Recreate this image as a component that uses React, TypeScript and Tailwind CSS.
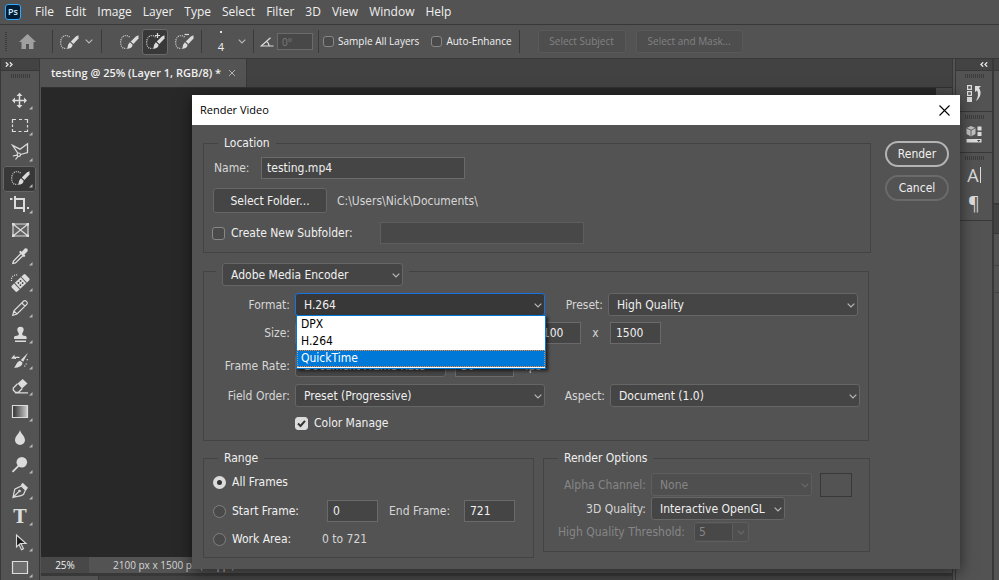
import type { ComponentProps, ReactNode } from "react";
import clsx from "clsx";

const menus = ["File", "Edit", "Image", "Layer", "Type", "Select", "Filter", "3D", "View", "Window", "Help"];

function Chevron({ className }: { className?: string }) {
  return (
    <svg viewBox="0 0 8 5" className={clsx("h-[5px] w-2 shrink-0 fill-none stroke-current", className)} strokeWidth="1.2">
      <path d="M.7.7 4 4 7.3.7" />
    </svg>
  );
}

function DoubleArrow({ flip }: { flip?: boolean }) {
  return (
    <svg viewBox="0 0 8 5" className={clsx("h-[5px] w-2 fill-none stroke-[#e0e0e0]", flip && "rotate-180")} strokeWidth="1.4">
      <path d="M.8.3 3 2.5.8 4.7M4.8.3 7 2.5 4.8 4.7" />
    </svg>
  );
}

function Grip() {
  return (
    <div className="flex h-1 gap-px">
      {[...Array(10)].map((_, i) => (
        <span key={i} className="w-px bg-[#3c3c3c]" />
      ))}
    </div>
  );
}

const brush = (
  <g fill="currentColor" stroke="none">
    <path d="M26.5 5.2v3.2L21.4 14l-2.6-2.4 5-5z" />
    <path d="M17.9 12.2l2.7 2.6c-.2 2.6-2.2 4-6.3 3.9 1.7-.9 1.3-2 1.8-4z" />
  </g>
);

const dottedLasso = (
  <path d="M17.5 7.2C15.5 5 12 5 10.2 7.4S8 14.5 10 17c1.2 1.4 2.6 1.6 4 1" strokeWidth="1.2" strokeDasharray="1 1.1" />
);

const tools: { name: string; icon: ReactNode; flat?: boolean }[] = [
  {
    name: "Move",
    icon: (
      <>
        <path d="M16.5 6v13M10 12.5h13" strokeWidth="1.5" />
        <path d="M16.5 4.8l3 3.2h-6zM16.5 20.2l3-3.2h-6zM9 12.5l3-3v6zM24 12.5l-3-3v6z" fill="currentColor" stroke="none" />
      </>
    ),
  },
  {
    name: "Marquee",
    icon: <path d="M9.5 9V5.5H13M16 5.5h3M21.5 5.5h3V9M24.5 11v2.5M24.5 15.5v2H21M18.5 17.5h-3M13 17.5H9.5V15M9.5 13v-2.500" strokeWidth="1.2" />,
  },
  {
    name: "Lasso",
    icon: (
      <>
        <path d="M15 13.5 9.7 5.5l7.3 3.700 7.500-5.500v8.800L17.500 14.500" strokeWidth="1.3" />
        <circle cx="15.8" cy="14.7" r="1.7" strokeWidth="1.2" />
        <path d="M14.3 15.2l-4.500.8M15 16.300 12.500 19.500" strokeWidth="1.2" />
      </>
    ),
  },
  { name: "Quick Selection", icon: <>{dottedLasso}{brush}</> },
  {
    name: "Crop",
    icon: <path d="M7 7h2.500M12 4v12H22M24 16h2M13 7h8v13" strokeWidth="2" />,
  },
  {
    name: "Frame",
    flat: true,
    icon: (
      <>
        <path d="M10 6h15v12H10zM10 6l15 12M25 6 10 18" fill="#636363" strokeWidth="1.2" />
        <path d="M9 5h2.500v2.500H9zM23.500 5H26v2.500h-2.500zM9 16.500h2.500V19H9zM23.500 16.500H26V19h-2.500z" fill="currentColor" stroke="none" />
      </>
    ),
  },
  {
    name: "Eyedropper",
    icon: (
      <>
        <path d="M18 9.500 10.500 17l-.7 2.500 2.700-.5L20 11.500" strokeWidth="1.3" />
        <path d="M16 8l1.500-1.300 1.300 1 2.700-3c2-1.500 4.200.7 2.900 2.700l-3 3 1 1.300-1.400 1.500z" fill="currentColor" stroke="none" />
      </>
    ),
  },
  {
    name: "Healing",
    icon: (
      <>
        <path d="M8.500 11c-.7-4 2.500-7 6.500-6" strokeDasharray="1 1.2" strokeWidth="1.2" />
        <g transform="rotate(-43 17.5 13)">
          <rect x="8" y="9" width="19" height="8" rx="1.5" fill="currentColor" stroke="none" />
          <path d="M13 9v8M22 9v8" stroke="#535353" strokeWidth="1" />
          <g fill="#3c3c3c" stroke="none">
            <circle cx="16" cy="11.5" r=".9" />
            <circle cx="19" cy="11.5" r=".9" />
            <circle cx="16" cy="14.5" r=".9" />
            <circle cx="19" cy="14.5" r=".9" />
          </g>
        </g>
      </>
    ),
  },
  {
    name: "Pencil",
    icon: <path d="M9.700 19.300l1.200-4.500L20.800 5c1.500-1.300 4.500 1.200 3.200 3.200L14 18zM10.900 14.800 14 18M18.800 7l3.200 3.200" strokeWidth="1.2" />,
  },
  {
    name: "Stamp",
    icon: (
      <path
        d="M17.500 4.700c2 0 3.200 1.300 3.200 3 0 1.800-1.500 2.600-1.500 4.300 0 1.500 1.200 1.800 3.300 2 1 .1 1.200.8 1.200 3H11c0-2.200.2-2.900 1.300-3 2.200-.2 3.500-.5 3.500-2 0-1.700-1.500-2.500-1.500-4.300 0-1.700 1.200-3 3.200-3zM12 18.600h11v1.300H12z"
        fill="currentColor"
        stroke="none"
      />
    ),
  },
  {
    name: "History Brush",
    icon: (
      <>
        <path d="M25 4.800l-4.800 9-2.400-1.800zM17.200 12.800l2.300 1.900c-.3 3.300-3.500 5-8.500 5 2.200-1.800 2.200-5.700 6.200-6.900zM8 10.500l3.500-4v2.300h5v1.200h-3.500v1z" fill="currentColor" stroke="none" />
        <path d="M24.300 11v2.500M23.500 15.500l-2 3" strokeWidth="1.2" strokeDasharray="1.2 1.4" />
      </>
    ),
  },
  {
    name: "Eraser",
    icon: (
      <>
        <path d="M14.500 9.500 19.700 5l4.800 4.500-5.500 5z" fill="currentColor" stroke="none" />
        <path d="M14.500 9.800 10.300 14v2l2.300 2.500h2.700l4-4M12 18.800h13" strokeWidth="1.3" />
      </>
    ),
  },
  {
    name: "Gradient",
    icon: (
      <>
        <linearGradient id="toolGradient">
          <stop offset="0" stopColor="#2c2c2c" />
          <stop offset="1" stopColor="#d0d0d0" />
        </linearGradient>
        <path d="M9.500 5.500h15v12h-15z" fill="url(#toolGradient)" strokeWidth="1.2" />
      </>
    ),
  },
  { name: "Blur", icon: <path d="M17 4c.6 3.500 5 6 5 10.200a5 4.800 0 0 1-10 0C12 10 16.400 7.500 17 4z" fill="currentColor" stroke="none" /> },
  {
    name: "Dodge",
    icon: (
      <>
        <circle cx="18.8" cy="10.2" r="5.3" fill="currentColor" stroke="none" />
        <path d="M15.500 13.800l-6 6" strokeWidth="1.8" />
      </>
    ),
  },
  {
    name: "Pen",
    icon: (
      <>
        <path d="M10 19.500c.8-3 .8-5.700 2-8.500l6.500-3 4 4-2 4.500c-3 2-6.500 1.600-10.500 3zm0 0 5.800-5.800" strokeWidth="1.2" />
        <circle cx="16.5" cy="13" r="1.3" fill="currentColor" stroke="none" />
        <path d="M17.700 7l2-2.200 5.300 5-2 2.600z" fill="currentColor" stroke="none" />
      </>
    ),
  },
  { name: "Type", icon: null },
  {
    name: "Path Selection",
    icon: (
      <>
        <path d="M15.800 14.200l2.700 5.500 2-1-2.500-5" strokeWidth="1.1" />
        <path d="M13.500 5v12l3-2.800 1-.7H23z" fill="#1c1c1c" strokeWidth="1.1" />
      </>
    ),
  },
  { name: "Rectangle", icon: <path d="M9.500 5.500h15v12h-15z" fill="#6e6e6e" strokeWidth="1.2" /> },
];

function BrushIcon({ mark }: { mark?: string }) {
  return (
    <svg viewBox="8 3 19 17" className="h-[17px] w-[19px] fill-none stroke-[#dcdcdc] text-[#dcdcdc]">
      {dottedLasso}
      {brush}
      {mark && <path d={mark} strokeWidth="1.2" />}
    </svg>
  );
}

function Separator() {
  return <span className="h-[23px] w-px shrink-0 bg-[#3a3a3a]" />;
}

function Check({ className, ...props }: ComponentProps<"input">) {
  return (
    <span className="relative flex shrink-0">
      <input
        type="checkbox"
        className={clsx(
          "peer appearance-none rounded-[3px] border border-[#878787] bg-[#4a4a4a] checked:border-[#dcdcdc] checked:bg-[#dcdcdc]",
          className,
        )}
        {...props}
      />
      <svg viewBox="0 0 13 13" className="pointer-events-none absolute inset-0 hidden fill-none stroke-[#333] peer-checked:block" strokeWidth="2">
        <path d="M3 6.500 5.500 9 10 3.800" />
      </svg>
    </span>
  );
}

function Radio(props: ComponentProps<"input">) {
  return (
    <input
      type="radio"
      name="range"
      className="size-[13px] shrink-0 appearance-none rounded-full border border-[#808080] bg-[#4a4a4a] checked:border-4 checked:border-[#dcdcdc] checked:bg-[#333]"
      {...props}
    />
  );
}

function Field({ className, ...props }: ComponentProps<"input">) {
  return (
    <input
      type="text"
      className={clsx("h-[22px] border border-[#6a6a6a] bg-[#454545] px-[5px] text-[#f0f0f0]", className)}
      {...props}
    />
  );
}

function Picker({ id, value, className, disabled, open }: { id: string; value: string; className: string; disabled?: boolean; open?: boolean }) {
  return (
    <span className={clsx("relative block shrink-0", className)}>
      <select
        id={id}
        disabled={disabled}
        defaultValue={value}
        className={clsx(
          "block h-[23px] w-full appearance-none rounded-[3px] border pl-2",
          disabled && "border-[#5e5e5e] bg-[#4f4f4f] text-[#868686] opacity-100",
          open && "border-[#1473e6] bg-[#383838] text-[#f0f0f0]",
          !disabled && !open && "border-[#666] bg-[#454545] text-[#f0f0f0]",
        )}
      >
        <option>{value}</option>
      </select>
      <Chevron className={clsx("pointer-events-none absolute right-[3px] top-[10px]", disabled ? "text-[#6a6a6a]" : "text-[#b8b8b8]")} />
    </span>
  );
}

function Group({ title, className, children }: { title: string; className?: string; children: ReactNode }) {
  return (
    <fieldset className={clsx("border border-[#434343]", className)}>
      <legend className="ml-[14px] px-[6px] leading-4 text-[#f0f0f0]">{title}</legend>
      {children}
    </fieldset>
  );
}

function MenuBar() {
  return (
    <nav className="flex h-[25px] shrink-0 items-center gap-[11px] border-b border-[#383838] pl-[5px] text-[12px] text-[#f0f0f0]">
      <span className="mr-[3px] flex size-4 items-center justify-center rounded-[3px] border border-[#31a8ff] bg-[#001e36] text-[9px] font-semibold text-[#d5ecff]">
        Ps
      </span>
      {menus.map((menu) => (
        <button key={menu}>{menu}</button>
      ))}
    </nav>
  );
}

function OptionsBar() {
  return (
    <div className="flex h-[34px] shrink-0 items-center border-b border-[#383838] pl-[5px] text-[10px] text-[#f0f0f0]">
      <div className="mr-3 flex h-[19px] w-[2px] flex-col gap-px">
        {[...Array(10)].map((_, i) => (
          <span key={i} className="h-px bg-[#3c3c3c]" />
        ))}
      </div>
      <button aria-label="Home">
        <svg viewBox="0 0 17 15" className="h-[15px] w-[17px] fill-[#a0a0a0]">
          <path d="M8.500 0 17 8h-2.500v7H10v-5H7v5H2.500V8H0z" />
        </svg>
      </button>
      <span className="w-4" />
      <Separator />
      <button aria-label="Tool preset" className="ml-[7px] flex items-center gap-[6px] text-[#b8b8b8]">
        <BrushIcon />
        <Chevron />
      </button>
      <span className="w-2" />
      <Separator />
      <button aria-label="New selection" className="ml-[18px]">
        <BrushIcon />
      </button>
      <button aria-label="Add to selection" className="ml-[3px] flex h-[26px] w-[26px] items-center justify-center rounded-[3px] border border-[#6a6a6a] bg-[#383838]">
        <BrushIcon mark="M19.500 3v5M17 5.500h5" />
      </button>
      <button aria-label="Subtract from selection" className="ml-[7px] mr-[7px]">
        <BrushIcon mark="M17.500 4.500h4.500" />
      </button>
      <Separator />
      <button aria-label="Brush size" className="ml-[15px] flex items-center gap-[13px] text-[11px]">
        <span className="flex w-2 flex-col items-center pt-px">
          <span className="mb-2 size-[2px] bg-[#e0e0e0]" />
          <span className="leading-3">4</span>
        </span>
        <Chevron className="text-[#b8b8b8]" />
      </button>
      <span className="w-[7px]" />
      <Separator />
      <label htmlFor="angle" aria-label="Angle" className="ml-[6px]">
        <svg viewBox="0 0 14 10" className="h-[10px] w-[14px] fill-none stroke-[#dcdcdc]" strokeWidth="1.2">
          <path d="M13.500 9H1.200L10.500.7M6.500 4.500c1.800 1 2.500 2.500 2.500 4.500" />
        </svg>
      </label>
      <input id="angle" disabled defaultValue="0°" className="ml-[3px] mr-[5px] h-[17px] w-9 border border-[#6a6a6a] bg-[#484848] px-1 text-[#7c7c7c]" />
      <Separator />
      <label className="ml-1 flex items-center gap-1 font-medium">
        <Check className="size-[11px]" />
        Sample All Layers
      </label>
      <label className="ml-3 mr-[7px] flex items-center gap-1 font-medium">
        <Check className="size-[11px]" />
        Auto-Enhance
      </label>
      <Separator />
      <button disabled className="ml-[18px] h-[23px] w-[88px] rounded-[3px] border border-[#595959] bg-[#4e4e4e] text-[#828282]">
        Select Subject
      </button>
      <button disabled className="ml-[10px] h-[23px] w-[107px] rounded-[3px] border border-[#595959] bg-[#4e4e4e] text-[#828282]">
        Select and Mask...
      </button>
    </div>
  );
}

function Toolbox() {
  return (
    <aside className="flex w-10 shrink-0 flex-col border-x border-[#383838]">
      <div className="flex h-3 shrink-0 items-center border-b border-[#383838] bg-[#434343] pl-1">
        <DoubleArrow />
      </div>
      <div className="flex h-[17px] shrink-0 justify-center pt-[3px]">
        <Grip />
      </div>
      {tools.map(({ name, icon, flat }) => (
        <button
          key={name}
          aria-label={name}
          className={clsx(
            "relative ml-[2px] h-[26px] w-[33px] shrink-0 text-[#dcdcdc]",
            name === "Quick Selection" && "rounded-[3px] bg-[#383838] outline outline-[#666] -outline-offset-1",
          )}
        >
          {name === "Type" && (
            <span className="absolute inset-0 flex items-center justify-center pl-px font-['DejaVu_Serif',serif] text-[18px] font-bold leading-none">T</span>
          )}
          <svg viewBox="0 0 33 26" className="h-[26px] w-[33px] fill-none stroke-current">
            {icon}
            {!flat && <path d="M29.500 18v3.500H26z" fill="#b8b8b8" stroke="none" />}
          </svg>
        </button>
      ))}
    </aside>
  );
}

function Document() {
  return (
    <main className="ml-px flex min-w-0 flex-1 flex-col border-r border-[#383838]">
      <div className="flex h-[29px] shrink-0 border-b border-[#303030] bg-[#424242]">
        <div className="flex items-center gap-[7px] border-r border-[#383838] bg-[#535353] pl-[10px] pr-[10px] text-[11px] font-semibold text-[#f0f0f0]">
          testing @ 25% (Layer 1, RGB/8) *
          <button aria-label="Close tab">
            <svg viewBox="0 0 8 8" className="size-2 stroke-[#b0b0b0]">
              <path d="M1 1l6 6M7 1 1 7" />
            </svg>
          </button>
        </div>
      </div>
      <div className="flex flex-1 bg-[#282828]">
        <div className="ml-auto w-4 bg-[#4a4a4a]" />
      </div>
      <div className="flex h-4 shrink-0 items-center text-[10px] text-[#f0f0f0]">
        <span className="flex h-full w-12 items-center justify-center bg-[#484848]">25%</span>
        <span className="pl-6 whitespace-nowrap text-[#d6d6d6]">2100 px x 1500 px (72 ppi)</span>
      </div>
      <div className="h-[7px] shrink-0 border-t-[3px] border-[#383838] bg-[#434343]">
        <div className="h-full w-[58px] border-r border-[#383838] bg-[#535353]" />
      </div>
    </main>
  );
}

function PanelGroup({ children }: { children: ReactNode }) {
  return (
    <div className="flex flex-col items-center gap-[7px] border-b border-[#383838] pt-[3px]">
      <Grip />
      {children}
    </div>
  );
}

function Panels() {
  return (
    <aside className="ml-[2px] flex w-11 shrink-0 border-l border-[#383838] text-[#dcdcdc]">
      <div className="flex-1">
        <div className="flex h-3 items-center justify-end border-b border-[#383838] bg-[#434343] pr-1">
          <DoubleArrow flip />
        </div>
        <PanelGroup>
          <button aria-label="History" className="mb-[9px]">
            <svg viewBox="0 0 16 17" className="h-[17px] w-4 fill-current">
              <path d="M1.600.6h3.800v3.800H1.600zM1.600 6.600h3.800v3.800H1.600z" fill="none" stroke="currentColor" strokeWidth="1.2" />
              <path d="M1 12h5v5H1zM9 1h6l-2 2c2.500 3.500 2.500 9-3 13 2.200-4 2.700-7.500 1-10.500L9 7z" />
            </svg>
          </button>
        </PanelGroup>
        <PanelGroup>
          <button aria-label="Libraries" className="mb-[9px]">
            <svg viewBox="0 0 16 17" className="h-[17px] w-4 fill-current">
              <path d="M5 0l4.500 2v6L5 10.500.5 8V2z" opacity=".8" />
              <path d="M.5 2 5 4.200 9.500 2M5 4.200v6" fill="none" stroke="#535353" strokeWidth=".8" />
              <path d="M11.500.5h4v4h-4zM11.500 6h4v4h-4zM.5 13h15v3.500H.5z" />
              <path d="M11 14h3.500l-1.800 2z" fill="#444" />
            </svg>
          </button>
        </PanelGroup>
        <PanelGroup>
          <button aria-label="Character" className="flex h-4 items-center gap-px text-[18px] leading-4">
            A
            <span className="h-4 w-px bg-[#dcdcdc]" />
          </button>
          <button aria-label="Paragraph" className="mb-1 text-[18px] leading-[26px]">¶</button>
        </PanelGroup>
      </div>
      <div className="flex w-[7px] flex-col border-l-2 border-[#383838]">
        <div className="h-3 border-b border-[#383838] bg-[#434343]" />
        <div className="h-[134px] border-b-2 border-[#383838]" />
        <div className="h-[29px] border-b border-[#383838] bg-[#434343]" />
        <div className="h-8 border-b border-[#434343]" />
        <div className="h-[27px] border-b border-[#434343]" />
      </div>
    </aside>
  );
}

const formats = ["DPX", "H.264", "QuickTime"];

function FormatList() {
  return (
    <ul
      role="listbox"
      aria-label="Format"
      className="absolute left-px right-[-1px] top-[22px] z-10 border border-[#0078d7] bg-white pb-px text-black shadow-[2px_2px_3px_rgba(0,0,0,0.6)]"
    >
      {formats.map((format) => (
        <li
          key={format}
          role="option"
          aria-selected={format === "QuickTime"}
          className={clsx(
            "h-[17px] px-1 leading-[17px]",
            format === "QuickTime" && "bg-[#0078d7] text-white outline-1 outline-dotted -outline-offset-1 outline-[#ff8728]",
          )}
        >
          {format}
        </li>
      ))}
    </ul>
  );
}

function Label({ htmlFor, className, children }: { htmlFor: string; className: string; children: ReactNode }) {
  return (
    <label htmlFor={htmlFor} className={clsx("mr-[5px] shrink-0 whitespace-nowrap text-right", className)}>
      {children}
    </label>
  );
}

function Location() {
  return (
    <Group title="Location" className="flex flex-col">
      <div className="mt-[6px] flex items-center">
        <label htmlFor="name" className="ml-[10px] w-[47px]">Name:</label>
        <Field id="name" defaultValue="testing.mp4" className="w-[204px]" />
      </div>
      <div className="mt-[9px] flex items-center">
        <button type="button" className="ml-[9px] mr-[10px] h-[25px] w-[114px] rounded-[3px] border border-[#666] bg-[#454545] text-[#f0f0f0]">
          Select Folder...
        </button>
        C:\Users\Nick\Documents\
      </div>
      <div className="mb-2 mt-[9px] flex items-center">
        <label className="ml-2 flex w-[168px] items-center gap-[6px] whitespace-nowrap text-[#f0f0f0]">
          <Check className="size-[13px]" />
          Create New Subfolder:
        </label>
        <input
          disabled
          aria-label="Subfolder name"
          className="h-[22px] w-[204px] border border-[#5e5e5e] bg-[#484848] px-1"
        />
      </div>
    </Group>
  );
}

function Encoder() {
  return (
    <fieldset className="mr-[2px] mt-[10px] border border-[#434343]">
      <legend className="ml-3 h-[17px] px-[6px]">
        <Picker id="encoder" value="Adobe Media Encoder" className="w-[181px]" />
      </legend>
      <div className="mt-[13px] flex items-center">
        <Label htmlFor="format" className="w-[86px]">Format:</Label>
        <div className="relative">
          <Picker id="format" value="H.264" open className="w-[250px]" />
          <FormatList />
        </div>
        <Label htmlFor="preset" className="w-[58px]">Preset:</Label>
        <Picker id="preset" value="High Quality" className="w-[250px]" />
      </div>
      <div className="mt-[6px] flex h-[22px] items-center">
        <Label htmlFor="size" className="w-[86px]">Size:</Label>
        <Picker id="size" value="Document Size" className="w-[225px]" />
        <Field aria-label="Width" defaultValue="2100" className="ml-[10px] w-[51px]" />
        <span className="w-[29px] text-center">x</span>
        <Field aria-label="Height" defaultValue="1500" className="w-[51px]" />
      </div>
      <div className="mt-[10px] flex items-center">
        <Label htmlFor="rate" className="w-[86px]">Frame Rate:</Label>
        <Picker id="rate" value="Document Frame Rate" className="w-[151px]" />
        <Field id="fps" defaultValue="30" className="ml-[9px] mr-[11px] w-[59px]" />
        <label htmlFor="fps">fps</label>
      </div>
      <div className="mt-[7px] flex items-center">
        <Label htmlFor="order" className="w-[86px]">Field Order:</Label>
        <Picker id="order" value="Preset (Progressive)" className="w-[250px]" />
        <Label htmlFor="aspect" className="w-[60px]">Aspect:</Label>
        <Picker id="aspect" value="Document (1.0)" className="w-[250px]" />
      </div>
      <label className="mb-[9px] ml-[91px] mt-2 flex h-4 items-center gap-[6px] text-[#f0f0f0]">
        <Check defaultChecked className="size-[13px]" />
        Color Manage
      </label>
    </fieldset>
  );
}

function Range() {
  return (
    <Group title="Range" className="w-[331px] shrink-0">
      <label className="ml-[9px] mt-2 flex h-4 items-center gap-[6px] text-[#f0f0f0]">
        <Radio defaultChecked />
        All Frames
      </label>
      <div className="mt-[10px] flex items-center">
        <label className="ml-[9px] flex w-[114px] items-center gap-[6px] text-[#f0f0f0]">
          <Radio />
          Start Frame:
        </label>
        <Field aria-label="Start frame" defaultValue="0" className="w-[51px]" />
        <label htmlFor="end" className="ml-[11px] w-[75px]">End Frame:</label>
        <Field id="end" defaultValue="721" className="w-[51px]" />
      </div>
      <div className="mb-[10px] mt-[9px] flex h-4 items-center">
        <label className="ml-[9px] flex w-[109px] items-center gap-[6px] text-[#f0f0f0]">
          <Radio />
          Work Area:
        </label>
        0 to 721
      </div>
    </Group>
  );
}

function RenderOptions() {
  return (
    <Group title="Render Options" className="ml-[9px] mr-px flex-1 self-start">
      <div className="mt-[7px] flex h-[23px] items-center">
        <Label htmlFor="alpha" className="w-[102px] text-[#868686]">Alpha Channel:</Label>
        <Picker id="alpha" value="None" disabled className="w-[161px]" />
        <button type="button" aria-label="Matte color" className="ml-2 h-6 w-8 border border-[#383838]" />
      </div>
      <div className="mt-px flex items-center">
        <Label htmlFor="quality" className="w-[102px]">3D Quality:</Label>
        <Picker id="quality" value="Interactive OpenGL" className="w-[134px]" />
      </div>
      <div className="mb-[9px] mt-[2px] flex items-center text-[#868686]">
        <Label htmlFor="threshold" className="ml-[9px] w-[132px]">High Quality Threshold:</Label>
        <span className="ml-1 flex h-5 w-[55px] items-center rounded-[3px] border border-[#5e5e5e] bg-[#4f4f4f]">
          <input id="threshold" disabled defaultValue="5" className="h-4 w-[38px] border-r border-[#5e5e5e] bg-[#484848] pl-1" />
          <Chevron className="ml-1 text-[#6a6a6a]" />
        </span>
      </div>
    </Group>
  );
}

function RenderDialog() {
  return (
    <section
      role="dialog"
      aria-label="Render Video"
      className="absolute left-48 right-[39px] top-[95px] bg-[#535353] shadow-[0_3px_14px_rgba(0,0,0,0.55)]"
    >
      <header className="flex h-[30px] items-center justify-between bg-white pl-2 pr-[10px] text-[11px] text-black">
        <h1>Render Video</h1>
        <button aria-label="Close">
          <svg viewBox="0 0 11 11" className="size-[11px] stroke-black" strokeWidth="1.1">
            <path d="M.5.5l10 10M10.500.5l-10 10" />
          </svg>
        </button>
      </header>
      <form className="flex gap-[14px] px-[11px] pb-[11px] pt-[10px] font-['DejaVu_Sans_Condensed','DejaVu_Sans',sans-serif] text-[12px] leading-4 text-[#d6d6d6]">
        <div className="min-w-0 flex-1">
          <Location />
          <Encoder />
          <div className="mt-[9px] flex">
            <Range />
            <RenderOptions />
          </div>
        </div>
        <div className="mt-[6px] flex w-16 flex-col gap-2 text-[#f0f0f0]">
          <button type="button" className="h-[26px] rounded-full border-2 border-[#b4b4b4]">Render</button>
          <button type="button" className="h-[26px] rounded-full border-2 border-[#6a6a6a]">Cancel</button>
        </div>
      </form>
    </section>
  );
}

export default function App() {
  return (
    <div className="relative flex h-screen flex-col overflow-hidden bg-[#535353] font-['Open_Sans','Noto_Sans',sans-serif]">
      <MenuBar />
      <OptionsBar />
      <div className="flex min-h-0 flex-1">
        <Toolbox />
        <Document />
        <Panels />
      </div>
      <RenderDialog />
    </div>
  );
}
